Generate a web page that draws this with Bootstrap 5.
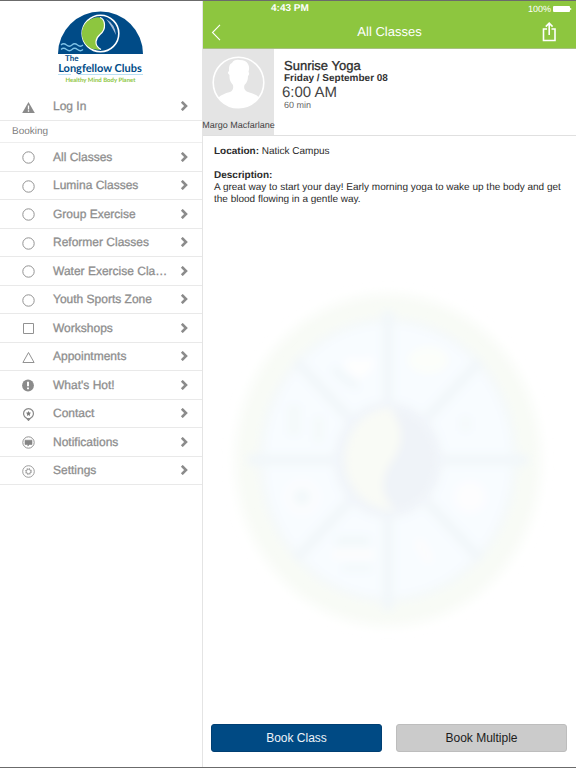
<!DOCTYPE html>
<html lang="en">
<head>
<meta charset="utf-8">
<meta name="viewport" content="width=device-width, initial-scale=1">
<title>All Classes – The Longfellow Clubs</title>
<link href="https://cdn.jsdelivr.net/npm/bootstrap@5.3.0/dist/css/bootstrap.min.css" rel="stylesheet">
<style>
  body { font-family: "Liberation Sans", Arial, sans-serif; color: #2b2b2b; font-size: 10px; line-height: 12px; background: #fff; text-rendering: geometricPrecision; }
  .app-shell { border-top: 1px solid #6b6b6b; border-bottom: 1px solid #6b6b6b; }
  .side-menu { flex: 0 0 203px; border-right: 1px solid #e4e4e4; }
  .brand-area { height: 91px; padding-top: 10px; }
  .menu-link { color: #8e8e8e; font-size: 12px; border-bottom: 1px solid #e9e9e9; padding: 0 14px 0 22px; text-decoration: none; }
  .menu-link:hover { background: #f7f7f7; }
  .menu-link span { -webkit-text-stroke: 0.3px #8e8e8e; }
  .menu-link.first-link { height: 29px; }
  .menu-link .glyph { width: 13px; height: 13px; margin-right: 18px; margin-top: 2px; flex: none; }
  .menu-link .arrow { width: 8px; height: 10px; flex: none; }
  .menu-heading { height: 22px; padding-left: 12px; font-size: 10px; line-height: 22px; color: #808080; border-bottom: 1px solid #eee; }
  .menu-grid { display: grid; grid-auto-rows: 1fr; height: 342px; }
  .top-area { background: #8dc63f; color: #fff; border-bottom: 1px solid #a8c084; }
  .status-row { height: 15px; font-size: 10px; padding-right: 4px; }
  .status-time { padding-left: 68px; }
  .status-power { font-size: 9px; gap: 2px; }
  .title-row { height: 32px; padding: 0 18px 0 8px; }
  .plain-btn { background: none; border: 0; padding: 0; color: #fff; line-height: 0; }
  .back-btn { width: 27px; }
  .title-row h1 { font-size: 13px; }
  .class-head { border-bottom: 1px solid #e0e0e0; }
  .teacher { width: 71px; height: 86px; background: #e4e4e4; font-size: 9px; padding-top: 7px; color: #444; }
  .teacher svg { width: 53px; height: 53px; }
  .class-facts { padding: 9px 0 0 10px; }
  .class-name { font-size: 13px; line-height: 15px; -webkit-text-stroke: 0.3px #2b2b2b; }
  .class-date { font-size: 10px; line-height: 11px; font-weight: 700; color: #333; }
  .class-time { font-size: 15px; line-height: 17px; color: #444; margin-left: -2px; }
  .class-length { font-size: 9px; line-height: 8px; color: #666; }
  .class-text { padding: 10px 11px 0 11px; }
  .wheel { top: 280px; left: 17px; width: 336px; height: 360px; pointer-events: none; }
  .actions { padding: 0 9px 15px 8px; gap: 14px; }
  .actions .btn { font-size: 12px; line-height: 16px; padding: 5px; border-radius: 3px; }
  .book-one { background: #004a84; color: #eef3f8; border-color: #003f73; }
  .book-many { background: #cbcbcb; color: #1c1c1c; border-color: #bdbdbd; }
</style>
<script src="https://cdn.jsdelivr.net/npm/bootstrap@5.3.0/dist/js/bootstrap.bundle.min.js"></script>
</head>
<body>
<svg class="d-none" aria-hidden="true">
  <symbol id="i-arrow" viewBox="0 0 8 10"><path d="M1.800 .8 6 5 1.800 9.200" fill="none" stroke="#8b8b8b" stroke-width="2.600"/></symbol>
  <symbol id="i-circle" viewBox="0 0 13 13"><circle cx="6.500" cy="6.500" r="5.700" fill="none" stroke="#929292"/></symbol>
  <symbol id="i-square" viewBox="0 0 13 13"><path d="M1.500 1.500h10v10h-10z" fill="none" stroke="#929292"/></symbol>
  <symbol id="i-triangle" viewBox="0 0 13 13"><path d="M6.500 1.500 12.100 11.500H.9z" fill="none" stroke="#929292"/></symbol>
</svg>
<div class="app-shell d-flex min-vh-100">
  <nav class="side-menu d-flex flex-column" aria-label="Main menu">
    <div class="brand-area text-center">
      <svg width="100" height="76" viewBox="0 0 100 76" role="img" aria-label="The Longfellow Clubs">
        <path d="M7 43A42.500 42.500 0 0 1 92 43z" fill="#004b87"/>
        <path d="M10 34q2.500-2.500 5.500 0t5.500 0 5.500 0 5.500 0M10 38.500q2.500-2.500 5.500 0t5.500 0 5.500 0 5.500 0" fill="none" stroke="#7fc4e8" stroke-width="1.200"/>
        <circle cx="49.500" cy="22.500" r="18.300" fill="#004b87" stroke="#fff" stroke-width="1.600"/>
        <path d="M49 6.500A16.200 16.200 0 1 0 50 38.500C42 34 45 27 49 23.500C56 18 54 8 49 6.500z" fill="#8dc63f"/>
        <path d="M49 6.500C54 8 56 18 49 23.500C45 27 42 34 50 38.500" fill="none" stroke="#fff" stroke-width="1.200"/>
        <path d="M55 8Q64 13 65 24Q60 14 55 8z" fill="#a9bfdb"/>
        <text x="14" y="50" font-family="Lato, sans-serif" font-size="8" font-weight="700" fill="#004b87">The</text>
        <text x="49" y="61" text-anchor="middle" font-family="Lato, sans-serif" font-size="11" font-weight="700" fill="#004b87">Longfellow Clubs</text>
        <path d="M7 63.500H20M27 63.500H92" stroke="#b9dff2"/>
        <text x="49.500" y="71" text-anchor="middle" font-family="Lato, sans-serif" font-size="6" font-weight="700" fill="#8dc63f">Healthy Mind Body Planet</text>
      </svg>
    </div>
    <a class="menu-link first-link d-flex align-items-center" href="#login">
      <svg class="glyph" viewBox="0 0 13 13"><path d="M6.500 1 12.800 12H.2z" fill="#8b8b8b"/><path d="M6.500 4.500v4M6.500 9.300v1.400" stroke="#fff" stroke-width="1.300"/></svg>
      <span class="flex-grow-1">Log In</span><svg class="arrow"><use href="#i-arrow"/></svg></a>
    <h2 class="menu-heading m-0 fw-normal">Booking</h2>
    <div class="menu-grid">
      <a class="menu-link d-flex align-items-center" href="#all"><svg class="glyph"><use href="#i-circle"/></svg><span class="flex-grow-1">All Classes</span><svg class="arrow"><use href="#i-arrow"/></svg></a>
      <a class="menu-link d-flex align-items-center" href="#lumina"><svg class="glyph"><use href="#i-circle"/></svg><span class="flex-grow-1">Lumina Classes</span><svg class="arrow"><use href="#i-arrow"/></svg></a>
      <a class="menu-link d-flex align-items-center" href="#group"><svg class="glyph"><use href="#i-circle"/></svg><span class="flex-grow-1">Group Exercise</span><svg class="arrow"><use href="#i-arrow"/></svg></a>
      <a class="menu-link d-flex align-items-center" href="#reformer"><svg class="glyph"><use href="#i-circle"/></svg><span class="flex-grow-1">Reformer Classes</span><svg class="arrow"><use href="#i-arrow"/></svg></a>
      <a class="menu-link d-flex align-items-center" href="#water"><svg class="glyph"><use href="#i-circle"/></svg><span class="flex-grow-1">Water Exercise Cla…</span><svg class="arrow"><use href="#i-arrow"/></svg></a>
      <a class="menu-link d-flex align-items-center" href="#youth"><svg class="glyph"><use href="#i-circle"/></svg><span class="flex-grow-1">Youth Sports Zone</span><svg class="arrow"><use href="#i-arrow"/></svg></a>
      <a class="menu-link d-flex align-items-center" href="#workshops"><svg class="glyph"><use href="#i-square"/></svg><span class="flex-grow-1">Workshops</span><svg class="arrow"><use href="#i-arrow"/></svg></a>
      <a class="menu-link d-flex align-items-center" href="#appointments"><svg class="glyph"><use href="#i-triangle"/></svg><span class="flex-grow-1">Appointments</span><svg class="arrow"><use href="#i-arrow"/></svg></a>
      <a class="menu-link d-flex align-items-center" href="#hot">
        <svg class="glyph" viewBox="0 0 13 13"><circle cx="6" cy="6.500" r="5.900" fill="#8b8b8b"/><path d="M6 2.700v4.600M6 8.500v1.800" stroke="#fff" stroke-width="1.900"/></svg>
        <span class="flex-grow-1">What's Hot!</span><svg class="arrow"><use href="#i-arrow"/></svg></a>
      <a class="menu-link d-flex align-items-center" href="#contact">
        <svg class="glyph" viewBox="0 0 13 13"><path d="M6.500 12.300 4.200 9.900A4.900 4.900 0 1 1 8.800 9.900z" fill="none" stroke="#8b8b8b" stroke-width="1.200"/><path d="M4.500 10h4L6.500 13z" fill="#8b8b8b"/><path d="m6.500 3 .8 1.600 1.800.2-1.300 1.300.3 1.800-1.600-.9-1.600.9.300-1.800-1.300-1.300 1.800-.2z" fill="#7c7c7c"/></svg>
        <span class="flex-grow-1">Contact</span><svg class="arrow"><use href="#i-arrow"/></svg></a>
      <a class="menu-link d-flex align-items-center" href="#notifications">
        <svg class="glyph" viewBox="0 0 13 13"><circle cx="6.500" cy="6.500" r="5.700" fill="none" stroke="#929292"/><path d="M3 4.200h7v4.300H7.500L5.800 10V8.500H3z" fill="#858585" stroke="#858585" stroke-width=".6"/></svg>
        <span class="flex-grow-1">Notifications</span><svg class="arrow"><use href="#i-arrow"/></svg></a>
      <a class="menu-link d-flex align-items-center" href="#settings">
        <svg class="glyph" viewBox="0 0 13 13"><g fill="none" stroke="#929292"><circle cx="6.500" cy="6.500" r="5.800" stroke-width=".9"/><circle cx="6.500" cy="6.500" r="2.200" stroke-width=".9"/><circle cx="6.500" cy="6.500" r="3.100" stroke-width=".9" stroke-dasharray="1.200 1.235"/></g></svg>
        <span class="flex-grow-1">Settings</span><svg class="arrow"><use href="#i-arrow"/></svg></a>
    </div>
  </nav>

  <main class="flex-grow-1 d-flex flex-column position-relative">
    <svg class="wheel position-absolute" viewBox="-6 -6 336 360" preserveAspectRatio="none" aria-hidden="true">
      <defs>
        <filter id="haze" x="-10%" y="-10%" width="120%" height="120%"><feGaussianBlur stdDeviation="6"/></filter>
        <filter id="soft" x="-10%" y="-10%" width="120%" height="120%"><feGaussianBlur stdDeviation="4"/></filter>
      </defs>
      <ellipse cx="162" cy="173" rx="153" ry="166" fill="#f8fbf6" filter="url(#haze)"/>
      <g filter="url(#soft)">
        <ellipse cx="162" cy="173" rx="130" ry="143" fill="#f5f9fa"/>
        <ellipse cx="162" cy="173" rx="123" ry="136" fill="#f8fcff"/>
        <path d="M162 24V323M22 173H302M70 74 254 272M254 74 70 272" stroke="#f2f7fa" stroke-width="11"/>
        <ellipse cx="162" cy="173" rx="55" ry="59" fill="#f2f6fa"/>
        <path d="M117 77q8-10 18-3 9-7 13 0 2 8-16 19z" fill="#fefefe"/>
        <path d="M108 81q8 12 24 18" stroke="#f1f7fa" stroke-width="8" fill="none"/>
        <ellipse cx="202" cy="73" rx="20" ry="13" fill="#fcfefa"/>
        <path d="M62 118h12v30h-12zM88 130h9v25h-9zM235 130h9v14h-9z" fill="#f4f9fa"/>
        <circle cx="76" cy="210" r="19" fill="#fbfdfe"/><circle cx="76" cy="210" r="8" fill="#f2f8fa"/>
        <circle cx="244" cy="210" r="16" fill="#fdfdfe"/>
        <path d="M110 249h34v10h-34zM116 278h30v6h-30z" fill="#f2f8fa"/><path d="M106 263h42v9h-42z" fill="#fdfdfd"/>
        <path d="M192 253l12 22" stroke="#fdfdfd" stroke-width="9"/>
      </g>
      <g filter="url(#soft)">
        <ellipse cx="163" cy="173" rx="46" ry="50" fill="#eff3f8"/>
        <path d="M164 121A48 51 0 1 0 170 223Q148 205 163 178Q186 150 164 121z" fill="#f9fbf6"/>
      </g>
    </svg>
    <header class="top-area">
      <div class="status-row d-flex justify-content-between align-items-center">
        <span class="status-time fw-bold">4:43 PM</span>
        <span class="status-power d-flex align-items-center">100%
          <svg width="19" height="8" viewBox="0 0 19 8" role="img" aria-label="Battery full"><rect x="0" y="1" width="17" height="6" rx="1" fill="#fff"/><path d="M17.500 3v2q1.200-1 0-2z" fill="#fff" stroke="#fff" stroke-width=".6"/></svg></span>
      </div>
      <div class="title-row d-flex align-items-center">
        <button class="plain-btn back-btn text-start" type="button" aria-label="Back"><svg width="11" height="17" viewBox="0 0 11 17"><path d="M9 .8 1.500 8.500 9 16.200" fill="none" stroke="#fff" stroke-width="1.100"/></svg></button>
        <h1 class="m-0 fw-normal flex-grow-1 text-center">All Classes</h1>
        <button class="plain-btn" type="button" aria-label="Share"><svg width="17" height="20" viewBox="0 0 17 20"><path d="M6 7H2.500v11.500h11.500V7H10.500M8.200 13V1.500M4.800 4.600 8.200 1.200 11.600 4.600" fill="none" stroke="#fff" stroke-width="1.600"/></svg></button>
      </div>
    </header>
    <section class="class-head d-flex">
      <div class="teacher text-center d-flex flex-column align-items-center justify-content-between text-nowrap">
        <svg viewBox="0 0 53 53" role="img" aria-label="Instructor portrait">
          <circle cx="26.500" cy="26.500" r="25.300" fill="#e4e4e4" stroke="#fff" stroke-width="1.600"/>
          <path d="M6.500 41.500Q10 38 18 36Q22 34 21 29Q17 25 17.500 19Q14.500 17 17 15Q16.500 8 20 7Q22 3 28 4Q34 4 36 8Q38 11 36.500 16Q38 18 36 20Q36 26 32.500 29Q31 34 36 36Q44 38 47 41.500A25 25 0 0 1 6.500 41.500z" fill="#fff"/>
        </svg>
        <span class="pb-1">Margo Macfarlane</span>
      </div>
      <div class="class-facts">
        <div class="class-name">Sunrise Yoga</div>
        <div class="class-date">Friday / September 08</div>
        <div class="class-time">6:00 AM</div>
        <div class="class-length">60 min</div>
      </div>
    </section>
    <section class="class-text flex-grow-1 position-relative">
      <p class="mb-0"><b>Location:</b> Natick Campus</p>
      <p class="mb-0 mt-2 pt-1"><b>Description:</b><br>A great way to start your day! Early morning yoga to wake up the body and get the blood flowing in a gentle way.</p>
    </section>
    <div class="actions d-flex position-relative">
      <button class="btn book-one flex-fill w-50" type="button">Book Class</button>
      <button class="btn book-many flex-fill w-50" type="button">Book Multiple</button>
    </div>
  </main>
</div>
</body>
</html>
